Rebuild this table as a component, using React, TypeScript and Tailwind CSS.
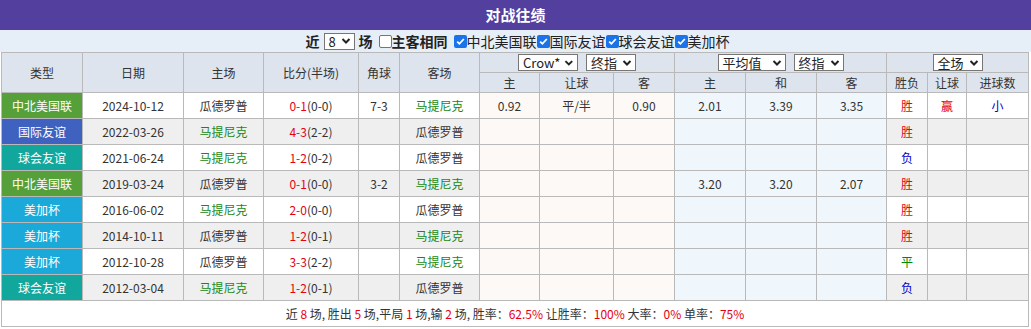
import React from 'react';

const typeColors: Record<string, string> = {
  中北美国联: 'bg-[#56a03a]',
  国际友谊: 'bg-[#3f62c0]',
  球会友谊: 'bg-[#12a79d]',
  美加杯: 'bg-[#1ba9da]',
};

const HOME = '瓜德罗普';
const AWAY = '马提尼克';

type Match = {
  type: string;
  date: string;
  home: string;
  away: string;
  score: string;
  half: string;
  corner?: string;
  odds?: string[];
  avg?: string[];
  result: string;
  rq?: string;
  dx?: string;
};

const matches: Match[] = [
  { type: '中北美国联', date: '2024-10-12', home: HOME, away: AWAY, score: '0-1', half: '(0-0)', corner: '7-3', odds: ['0.92', '平/半', '0.90'], avg: ['2.01', '3.39', '3.35'], result: '胜', rq: '赢', dx: '小' },
  { type: '国际友谊', date: '2022-03-26', home: AWAY, away: HOME, score: '4-3', half: '(2-2)', result: '胜' },
  { type: '球会友谊', date: '2021-06-24', home: AWAY, away: HOME, score: '1-2', half: '(0-2)', result: '负' },
  { type: '中北美国联', date: '2019-03-24', home: HOME, away: AWAY, score: '0-1', half: '(0-0)', corner: '3-2', avg: ['3.20', '3.20', '2.07'], result: '胜' },
  { type: '美加杯', date: '2016-06-02', home: AWAY, away: HOME, score: '2-0', half: '(0-0)', result: '胜' },
  { type: '美加杯', date: '2014-10-11', home: HOME, away: AWAY, score: '1-2', half: '(0-1)', result: '胜' },
  { type: '美加杯', date: '2012-10-28', home: HOME, away: AWAY, score: '3-3', half: '(2-2)', result: '平' },
  { type: '球会友谊', date: '2012-03-04', home: AWAY, away: HOME, score: '1-2', half: '(0-1)', result: '负' },
];

const resultColor: Record<string, string> = {
  胜: 'text-[#e60012]',
  平: 'text-[#008800]',
  负: 'text-[#0000cc]',
};

const Chevron = () => (
  <svg width="10" height="8" viewBox="0 0 10 8" className="ml-[4px]">
    <path d="M1.5 2 L5 5.5 L8.5 2" stroke="#222" strokeWidth="2" fill="none" />
  </svg>
);

const Select = ({ label, w }: { label: string; w: string }) => (
  <span className={`inline-flex h-[17px] items-center justify-between border border-[#767676] bg-white pl-[4px] pr-[3px] text-[13px] leading-none text-[#222] ${w}`}>
    <span>{label}</span>
    <Chevron />
  </span>
);

const Check = ({ on }: { on: boolean }) =>
  on ? (
    <span className="inline-flex h-[13px] w-[13px] items-center justify-center rounded-[2px] bg-[#1a73e8] align-[-1px]">
      <svg width="11" height="11" viewBox="0 0 11 11">
        <path d="M2.2 5.6 L4.4 7.8 L8.8 3" stroke="#fff" strokeWidth="1.8" fill="none" />
      </svg>
    </span>
  ) : (
    <span className="inline-block h-[13px] w-[13px] rounded-[2px] border border-[#767676] bg-white align-[-1px]" />
  );

const teamCls = (t: string) => (t === AWAY ? 'text-[#168a16]' : 'text-[#333]');

export default function App() {
  const cell = 'border border-[#b9b9b9] text-center p-0';
  return (
    <div className="w-[1031px] h-[329px] bg-white text-[12px] text-[#333]" style={{ fontFamily: '"Noto Sans CJK SC", "Noto Sans", sans-serif' }}>
      <div className="flex h-[30px] items-center justify-center bg-[#523f9e] text-[15px] font-bold text-white">对战往绩</div>
      <div className="flex h-[22px] items-center justify-center gap-[4px] bg-[#e6eef8] pl-[4px] text-[14px] leading-none text-[#222]">
        <span className="font-bold">近</span>
        <Select label="8" w="w-[31px]" />
        <span className="font-bold">场</span>
        <span className="ml-[2px] flex items-center font-bold">
          <Check on={false} />
          主客相同
        </span>
        <span className="ml-[2px] flex items-center">
          <Check on />
          中北美国联
          <Check on />
          国际友谊
          <Check on />
          球会友谊
          <Check on />
          美加杯
        </span>
      </div>
      <table className="ml-[1px] w-[1027px] table-fixed border-collapse">
        <colgroup>
          <col className="w-[81px]" />
          <col className="w-[101px]" />
          <col className="w-[80px]" />
          <col className="w-[95px]" />
          <col className="w-[41px]" />
          <col className="w-[80px]" />
          <col className="w-[60px]" />
          <col className="w-[74px]" />
          <col className="w-[61px]" />
          <col className="w-[71px]" />
          <col className="w-[71px]" />
          <col className="w-[70px]" />
          <col className="w-[41px]" />
          <col className="w-[39px]" />
          <col className="w-[62px]" />
        </colgroup>
        <thead className="bg-[#dde4ed] text-[#333]">
          <tr className="h-[20px]">
            <th rowSpan={2} className={`${cell} font-normal`}>类型</th>
            <th rowSpan={2} className={`${cell} font-normal`}>日期</th>
            <th rowSpan={2} className={`${cell} font-normal`}>主场</th>
            <th rowSpan={2} className={`${cell} font-normal`}>比分(半场)</th>
            <th rowSpan={2} className={`${cell} font-normal`}>角球</th>
            <th rowSpan={2} className={`${cell} font-normal`}>客场</th>
            <th colSpan={3} className={`${cell} font-normal`}>
              <div className="flex items-center justify-center gap-[8px]">
                <Select label="Crow*" w="w-[60px]" />
                <Select label="终指" w="w-[50px]" />
              </div>
            </th>
            <th colSpan={3} className={`${cell} font-normal`}>
              <div className="flex items-center justify-center gap-[8px]">
                <Select label="平均值" w="w-[68px]" />
                <Select label="终指" w="w-[50px]" />
              </div>
            </th>
            <th colSpan={3} className={`${cell} font-normal`}>
              <div className="flex items-center justify-center">
                <Select label="全场" w="w-[50px]" />
              </div>
            </th>
          </tr>
          <tr className="h-[20px]">
            {['主', '让球', '客', '主', '和', '客', '胜负', '让球', '进球数'].map((h, i) => (
              <th key={i} className={`${cell} font-normal`}>{h}</th>
            ))}
          </tr>
        </thead>
        <tbody>
          {matches.map((m, i) => {
            const rowBg = i % 2 === 0 ? 'bg-white' : 'bg-[#efefef]';
            return (
              <tr key={i} className="h-[26px]">
                <td className={`${cell} ${typeColors[m.type]} text-[12px] text-white`}>{m.type}</td>
                <td className={`${cell} ${rowBg}`}>{m.date}</td>
                <td className={`${cell} ${rowBg} ${teamCls(m.home)}`}>{m.home}</td>
                <td className={`${cell} ${rowBg}`}>
                  <span className="text-[#e60012]">{m.score}</span>
                  {m.half}
                </td>
                <td className={`${cell} ${rowBg}`}>{m.corner ?? ''}</td>
                <td className={`${cell} ${rowBg} ${teamCls(m.away)}`}>{m.away}</td>
                {[0, 1, 2].map((k) => (
                  <td key={`o${k}`} className={`${cell} bg-[#fdf9f6]`}>{m.odds?.[k] ?? ''}</td>
                ))}
                {[0, 1, 2].map((k) => (
                  <td key={`a${k}`} className={`${cell} bg-[#f0f7fc]`}>{m.avg?.[k] ?? ''}</td>
                ))}
                <td className={`${cell} ${rowBg} ${resultColor[m.result]}`}>{m.result}</td>
                <td className={`${cell} ${rowBg} text-[#e60012]`}>{m.rq ?? ''}</td>
                <td className={`${cell} ${rowBg} text-[#0000cc]`}>{m.dx ?? ''}</td>
              </tr>
            );
          })}
          <tr className="h-[26px]">
            <td colSpan={15} className={`${cell} bg-white`}>
              近 <span className="text-[#e60012]">8</span> 场, 胜出 <span className="text-[#e60012]">5</span> 场,平局{' '}
              <span className="text-[#e60012]">1</span> 场,输 <span className="text-[#e60012]">2</span> 场, 胜率：
              <span className="text-[#e60012]">62.5%</span> 让胜率：<span className="text-[#e60012]">100%</span> 大率：
              <span className="text-[#e60012]">0%</span> 单率：<span className="text-[#e60012]">75%</span>
            </td>
          </tr>
        </tbody>
      </table>
    </div>
  );
}
